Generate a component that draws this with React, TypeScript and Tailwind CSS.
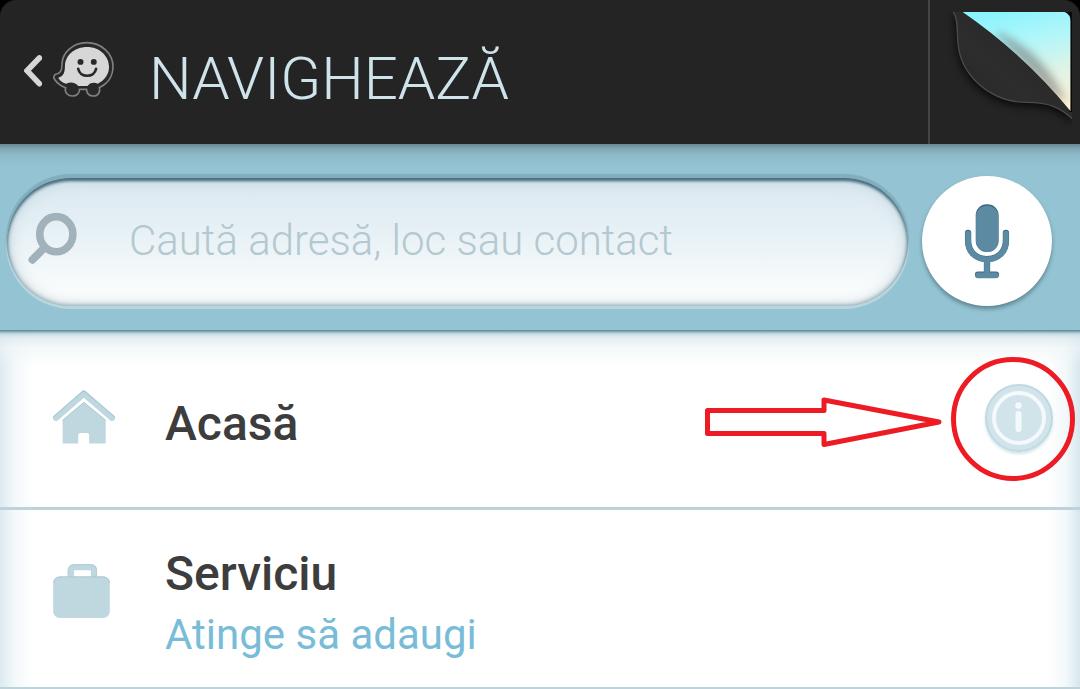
import { useState } from "react";
import type { ReactNode } from "react";

function WazeLogo() {
  return (
    <svg viewBox="156 120 190 172" className="mb-1 h-[57px] w-[63px]" aria-hidden="true">
      <path
        d="M261 125C218 125 187 155 186 190C186 204 183 215 174 218C163 219 158 229 164 236C172 248 184 256 197 261C193 276 204 286 218 286C231 286 239 277 239 266H260C261 278 269 286 281 286C295 286 303 274 299 260C324 249 340 226 340 197C340 157 304 125 261 125Z"
        fill="#292929"
        stroke="#808080"
        strokeWidth="5"
      />
      <path
        d="M262 138C224 138 196 163 195 195C195 215 191 227 175 231C181 242 189 247 199 249C211 242 228 245 235 256H263C269 246 283 243 294 249C315 239 328 221 328 198C328 164 298 138 262 138Z"
        fill="#d7d7d7"
      />
      <circle cx="242" cy="183" r="9" fill="#292929" />
      <circle cx="282" cy="183" r="9" fill="#292929" />
      <path d="M235 204C240 232 284 232 289 204" fill="none" stroke="#292929" strokeWidth="8" strokeLinecap="round" />
    </svg>
  );
}

function PageCurl() {
  return (
    <svg viewBox="90 0 450 432" className="h-36 w-[150px]" aria-hidden="true">
      <defs>
        <linearGradient id="sky" x1="0.4" y1="0" x2="0.65" y2="1">
          <stop offset="0" stopColor="#8af4ff" />
          <stop offset="0.35" stopColor="#b5f6f8" />
          <stop offset="0.7" stopColor="#e4f3e4" />
          <stop offset="1" stopColor="#fff0d4" />
        </linearGradient>
        <linearGradient id="leaf" x1="0" y1="1" x2="1" y2="0">
          <stop offset="0" stopColor="#242424" />
          <stop offset="0.4" stopColor="#2d2d2d" />
          <stop offset="1" stopColor="#222222" />
        </linearGradient>
        <filter id="soft" x="-30%" y="-30%" width="160%" height="160%">
          <feGaussianBlur stdDeviation="12" />
        </filter>
        <clipPath id="well">
          <path d="M100 36H516V400H100Z" />
        </clipPath>
        <clipPath id="skyClip">
          <path d="M188 36H494Q512 44 512 64V334Q376 166 188 36Z" />
        </clipPath>
      </defs>
      <g clipPath="url(#well)">
        <path
          d="M160 36C176 60 170 92 174 130C181 218 262 306 380 307C450 307 482 324 518 357V36Z"
          transform="translate(-3 12)"
          fill="#000"
          opacity="0.75"
          filter="url(#soft)"
        />
        <path
          d="M160 36C176 60 170 92 174 130C181 218 262 306 380 307C450 307 482 324 518 357L530 20H150Z"
          fill="url(#leaf)"
          stroke="#4a4a4a"
          strokeWidth="4"
        />
        <path d="M480 30H516V336H508Z" fill="#080808" />
      </g>
      <g clipPath="url(#skyClip)">
        <path d="M180 30H520V340H180Z" fill="url(#sky)" />
        <path d="M290 100Q350 125 400 170T492 300L450 270L376 190Z" fill="#666" stroke="#666" strokeWidth="8" opacity="0.55" filter="url(#soft)" />
      </g>
    </svg>
  );
}

function SearchIcon() {
  return (
    <svg viewBox="84 216 150 160" className="mb-2 h-[53px] w-[50px] shrink-0" aria-hidden="true">
      <ellipse cx="169" cy="283" rx="50" ry="53" fill="none" stroke="#a2b2ba" strokeWidth="23" />
      <path d="M127 330L97 360" stroke="#a2b2ba" strokeWidth="24" strokeLinecap="round" />
    </svg>
  );
}

function MicIcon() {
  return (
    <svg viewBox="432 190 138 226" className="h-[75px] w-[46px]" aria-hidden="true">
      <g fill="none" stroke="#3b687e" strokeWidth="19" strokeLinecap="round">
        <path d="M444 277V300C444 375 558 375 558 300V277" />
        <path d="M501 362V402M474 403H528" />
      </g>
      <g fill="none" stroke="#5b8aa2" strokeWidth="17" strokeLinecap="round">
        <path d="M444 279V302C444 375 558 375 558 302V279" />
        <path d="M501 364V404M474 405H528" />
      </g>
      <rect x="467" y="191" width="69" height="143" rx="33" fill="#3b687e" />
      <rect x="468" y="195" width="67" height="140" rx="33" fill="#5b8aa2" />
    </svg>
  );
}

function HomeIcon() {
  return (
    <svg viewBox="159 88 187 162" className="mb-1 h-[54px] w-[62px]" aria-hidden="true">
      <path d="M168 171L252 98L337 171" fill="none" stroke="#a5c8d2" strokeWidth="18" strokeLinecap="round" strokeLinejoin="round" />
      <path d="M168 173L252 101L337 173" fill="none" stroke="#bfd7df" strokeWidth="15" strokeLinecap="round" strokeLinejoin="round" />
      <path d="M188 178L252 124L318 178V249H268V224Q268 217 260 217H243Q235 217 235 224V249H188Z" fill="#bfd7df" />
      <path d="M188 179L252 125L318 179" fill="none" stroke="#a9cad4" strokeWidth="3" />
    </svg>
  );
}

function BriefcaseIcon() {
  return (
    <svg viewBox="159 72 171 163" className="mb-4 h-[54px] w-[57px]" aria-hidden="true">
      <path d="M213 114V92Q213 82 223 82H272Q282 82 282 92V114" fill="none" stroke="#bfd7df" strokeWidth="18" />
      <path d="M204 108V91Q206 74 223 74H272Q289 74 290 91V108" fill="none" stroke="#adcdd6" strokeWidth="3" />
      <rect x="159" y="110" width="171" height="125" rx="20" fill="#bfd7df" />
      <path d="M161 129Q162 112 179 111H310Q327 112 329 129" fill="none" stroke="#a8c9d3" strokeWidth="3" />
    </svg>
  );
}

function InfoIcon() {
  return (
    <svg viewBox="0 0 68 68" className="size-[68px]" aria-hidden="true">
      <circle cx="34" cy="34" r="33" fill="#d1e4ea" stroke="#bfd9e1" strokeWidth="2" />
      <circle cx="34" cy="34" r="25" fill="none" stroke="#f3f9fc" strokeWidth="4" />
      <circle cx="33.5" cy="21.5" r="3.2" fill="#f3f9fc" />
      <path d="M33.5 30V45" stroke="#f3f9fc" strokeWidth="6" strokeLinecap="round" />
    </svg>
  );
}

/* Red arrow and ring that point at the info button */
function Callout() {
  return (
    <svg
      viewBox="0 0 380 140"
      className="pointer-events-none absolute top-5 right-0 h-[140px] w-[380px]"
      fill="none"
      stroke="#ed1c24"
      strokeWidth="5"
      strokeLinejoin="round"
      aria-hidden="true"
    >
      <path d="M7.5 60.5H124V50L239 72L124 94.5V83.5H7.5Z" />
      <circle cx="313" cy="69" r="59.5" />
    </svg>
  );
}

type PlaceProps = {
  icon: ReactNode;
  name: string;
  hint?: string;
  first?: boolean;
  children?: ReactNode;
};

function PlaceRow({ icon, name, hint, first, children }: PlaceProps) {
  return (
    <li className="relative flex h-[180px] items-center border-b-[3px] border-[#bdd2da] bg-[linear-gradient(90deg,#dceaf0_0px,#f3f8fa_14px,#fff_34px,#fff_calc(100%-34px),#f3f8fa_calc(100%-14px),#d8e7ed_100%)]">
      {first && (
        <div className="absolute inset-x-0 top-0 h-9 bg-[linear-gradient(180deg,#5c8292_0px,#8fb4c1_2px,#c9dde4_4px,#dfeaeecc_8px,#eff5f799_18px,#ffffff00_36px)]" />
      )}
      <a href="#place" className="flex flex-1 items-center pl-[53px]">
        <span className="w-28">{icon}</span>
        <span className="flex flex-col pt-[10px]">
          <span className="text-[48px] leading-[62px] font-medium text-[#3d3d3d]">{name}</span>
          {hint && <span className="text-[42px] leading-[60px] text-[#78bcd8]">{hint}</span>}
        </span>
      </a>
      {children}
    </li>
  );
}

export default function App() {
  const [query, setQuery] = useState("");

  return (
    <div className="h-screen overflow-hidden bg-black font-[Roboto,sans-serif]">
      <header className="flex h-36 items-center rounded-t-2xl bg-[#242424]">
        <button type="button" aria-label="Înapoi" className="mb-[2px] ml-6 flex items-center gap-[10px]">
          <svg viewBox="72 164 54 96" className="h-8 w-[18px]" aria-hidden="true">
            <path d="M118 173L81 211L118 250" fill="none" stroke="#d6d6d6" strokeWidth="17" strokeLinecap="round" />
          </svg>
          <WazeLogo />
        </button>
        <h1 className="mt-[14px] ml-[34px] flex-1 text-[60px] leading-[72px] font-light text-[#cfe3ea]">NAVIGHEAZĂ</h1>
        <button type="button" aria-label="Hartă" className="h-36 border-l-2 border-[#454545]">
          <PageCurl />
        </button>
      </header>

      <form
        onSubmit={(e) => e.preventDefault()}
        className="flex items-center gap-[14px] bg-[linear-gradient(180deg,#698894_0px,#7ea3b1_4px,#8cb9c8_10px,#94c4d3_22px)] pt-8 pr-7 pb-6 pl-[7px]"
      >
        <label
          htmlFor="search"
          className="mt-[2px] flex h-32 flex-1 items-center rounded-full bg-[linear-gradient(180deg,#dae9f0_0%,#e4eff4_35%,#f0f6f9_65%,#fbfdfd_90%)] pl-[21px] shadow-[inset_0_3px_3px_#476f80,inset_0_0_5px_#6f8d99,inset_0_0_16px_#9db9c4a0,0_-3px_1px_1px_#82adbc,0_2px_0_1px_#b9d6df]"
        >
          <SearchIcon />
          <input
            id="search"
            type="text"
            aria-label="Caută adresă, loc sau contact"
            value={query}
            onChange={(e) => setQuery(e.target.value)}
            placeholder="Caută adresă, loc sau contact"
            className="mb-1 ml-[51px] h-16 min-w-0 flex-1 bg-transparent text-[42px] font-light text-[#5b7a86] outline-none placeholder:text-[#b3c8cf]"
          />
        </label>
        <button
          type="button"
          aria-label="Căutare vocală"
          className="flex size-[130px] shrink-0 items-center justify-center rounded-full bg-white shadow-[0_3px_4px_#5f8593]"
        >
          <MicIcon />
        </button>
      </form>

      <ul className="bg-white">
        <PlaceRow icon={<HomeIcon />} name="Acasă" first>
          <button type="button" aria-label="Informații" className="mr-[27px] mb-[2px] rounded-full shadow-[0_2px_3px_#d1e4ea]">
            <InfoIcon />
          </button>
          <Callout />
        </PlaceRow>
        <PlaceRow icon={<BriefcaseIcon />} name="Serviciu" hint="Atinge să adaugi" />
      </ul>
    </div>
  );
}
